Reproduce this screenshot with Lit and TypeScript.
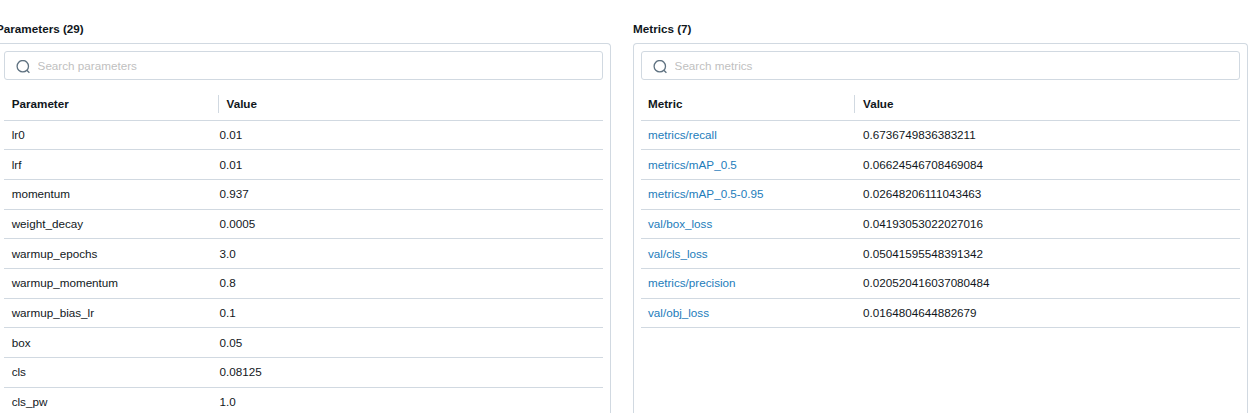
import { LitElement, html, css } from "lit";
import { customElement, property } from "lit/decorators.js";
import { classMap } from "lit/directives/class-map.js";

type Row = [string, string];

const PARAMETERS: Row[] = [
  ["lr0", "0.01"],
  ["lrf", "0.01"],
  ["momentum", "0.937"],
  ["weight_decay", "0.0005"],
  ["warmup_epochs", "3.0"],
  ["warmup_momentum", "0.8"],
  ["warmup_bias_lr", "0.1"],
  ["box", "0.05"],
  ["cls", "0.08125"],
  ["cls_pw", "1.0"],
];

const METRICS: Row[] = [
  ["metrics/recall", "0.6736749836383211"],
  ["metrics/mAP_0.5", "0.06624546708469084"],
  ["metrics/mAP_0.5-0.95", "0.02648206111043463"],
  ["val/box_loss", "0.04193053022027016"],
  ["val/cls_loss", "0.05041595548391342"],
  ["metrics/precision", "0.020520416037080484"],
  ["val/obj_loss", "0.0164804644882679"],
];

@customElement("run-panel")
export class RunPanel extends LitElement {
  @property() heading = "";
  @property() placeholder = "";
  @property() label = "";
  @property({ type: Boolean }) links = false;
  @property({ attribute: false }) rows: Row[] = [];

  static styles = css`
    :host {
      display: flex;
      flex-direction: column;
      min-width: 0;
    }
    * {
      box-sizing: border-box;
    }
    .heading {
      flex: none;
      height: 43px;
      padding-top: 21px;
      font-size: 11.7px;
      font-weight: 700;
      line-height: 16px;
    }
    .box {
      flex: 1 0 auto;
      border: 1px solid #d1d9e1;
      border-bottom: 0;
      border-radius: 4px 4px 0 0;
      padding: 7px;
    }
    .search {
      display: flex;
      align-items: center;
      height: 29px;
      padding-left: 11px;
      border: 1px solid #d1d9e1;
      border-radius: 3px;
    }
    .icon {
      display: block;
      width: 14px;
      height: 14px;
      margin-top: 2px;
      margin-right: 7.6px;
      fill: none;
      stroke: #5f7281;
      stroke-width: 1.3;
    }
    .input {
      width: 400px;
      padding: 0;
      border: 0;
      outline: 0;
      background: none;
      font: inherit;
      color: #11171c;
    }
    .input::placeholder {
      color: #bfbfbf;
      opacity: 1;
    }
    .row {
      display: grid;
      grid-template-columns: 215px 1fr;
      align-items: center;
      height: 29.67px;
      border-bottom: 1px solid #d1d9e1;
    }
    .header {
      height: 40.7px;
      padding-top: 8px;
      font-weight: 700;
    }
    .name {
      padding-left: 7.7px;
    }
    .value {
      padding-left: 0.5px;
    }
    .header .name {
      height: 18px;
      line-height: 18px;
      border-right: 1px solid #d1d9e1;
    }
    .header .value {
      padding-left: 7.5px;
    }
    .row.wide {
      grid-template-columns: 214px 1fr;
    }
    .wide .name {
      padding-left: 7px;
    }
    .wide .value,
    .header.wide .value {
      padding-left: 8px;
    }
    .link {
      color: #227cbb;
      text-decoration: none;
    }
  `;

  render() {
    const wide = { wide: this.links };
    return html`
      <div class="heading">${this.heading}</div>
      <div class="box">
        <div class="search">
          <svg class="icon" viewBox="0 0 14 14">
            <circle cx="6.8" cy="6.2" r="5.7" />
            <path d="M10.8 10.2 L13.4 12.8" />
          </svg>
          <input class="input" placeholder=${this.placeholder} />
        </div>
        <div class=${classMap({ row: true, header: true, ...wide })}>
          <div class="name">${this.label}</div>
          <div class="value">Value</div>
        </div>
        ${this.rows.map(
          ([name, value]) => html`
            <div class=${classMap({ row: true, ...wide })}>
              <div class="name">
                ${this.links ? html`<a class="link" href="#">${name}</a>` : name}
              </div>
              <div class="value">${value}</div>
            </div>
          `
        )}
      </div>
    `;
  }
}

@customElement("app-root")
export class AppRoot extends LitElement {
  static styles = css`
    :host {
      display: block;
      height: 413px;
      overflow: hidden;
      background: #fff;
      color: #11171c;
      font: 11.68px/16px "Liberation Sans", Arial, sans-serif;
    }
    .panels {
      display: grid;
      grid-template-columns: 615px 615px;
      column-gap: 22px;
      height: 413px;
      margin-left: -4px;
    }
    .panel {
      height: 413px;
    }
  `;

  render() {
    return html`
      <div class="panels">
        <run-panel
          class="panel"
          heading="Parameters (29)"
          placeholder="Search parameters"
          label="Parameter"
          .rows=${PARAMETERS}
        ></run-panel>
        <run-panel
          class="panel"
          heading="Metrics (7)"
          placeholder="Search metrics"
          label="Metric"
          links
          .rows=${METRICS}
        ></run-panel>
      </div>
    `;
  }
}
